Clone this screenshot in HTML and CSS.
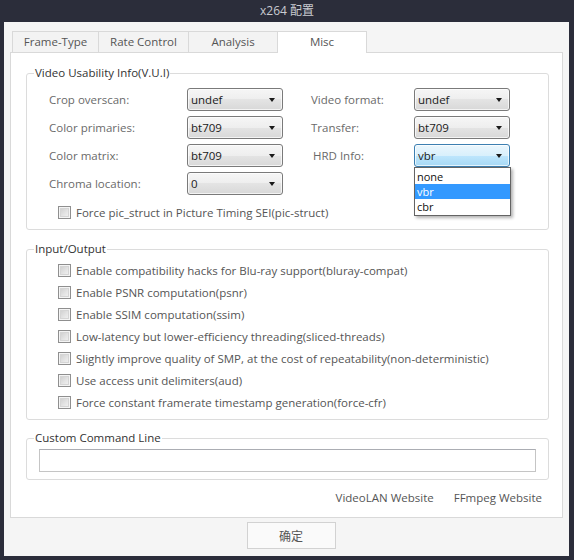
FILE: index.html
```html
<!DOCTYPE html>
<html>
<head>
<meta charset="utf-8">
<link rel="stylesheet" href="styles.css">
</head>
<body>
<div class="window">
  <div class="titlebar">x264 配置</div>
  <div class="client">
    <div class="tabs">
      <div class="tab t1">Frame-Type</div>
      <div class="tab t2">Rate Control</div>
      <div class="tab t3">Analysis</div>
      <div class="tab t4 active">Misc</div>
    </div>
    <div class="pane">
      <fieldset class="group vui">
        <legend>Video Usability Info(V.U.I)</legend>
        <div class="vui-body">
          <div class="grid">
            <div class="lbl">Crop overscan:</div>
            <div class="combo"><span>undef</span><i class="arrow"></i></div>
            <div></div>
            <div class="lbl">Video format:</div>
            <div class="combo"><span>undef</span><i class="arrow"></i></div>

            <div class="lbl">Color primaries:</div>
            <div class="combo"><span>bt709</span><i class="arrow"></i></div>
            <div></div>
            <div class="lbl">Transfer:</div>
            <div class="combo"><span>bt709</span><i class="arrow"></i></div>

            <div class="lbl">Color matrix:</div>
            <div class="combo"><span>bt709</span><i class="arrow"></i></div>
            <div></div>
            <div class="lbl lbl-hrd">HRD Info:</div>
            <div class="combo focus"><span>vbr</span><i class="arrow"></i>
              <div class="dropdown">
                <div class="opt">none</div>
                <div class="opt sel">vbr</div>
                <div class="opt">cbr</div>
              </div>
            </div>

            <div class="lbl">Chroma location:</div>
            <div class="combo"><span>0</span><i class="arrow"></i></div>
          </div>
          <div class="check first"><i class="box"></i><span>Force pic_struct in Picture Timing SEI(pic-struct)</span></div>
        </div>
      </fieldset>

      <fieldset class="group io">
        <legend>Input/Output</legend>
        <div class="io-body">
          <div class="check"><i class="box"></i><span>Enable compatibility hacks for Blu-ray support(bluray-compat)</span></div>
          <div class="check"><i class="box"></i><span>Enable PSNR computation(psnr)</span></div>
          <div class="check"><i class="box"></i><span>Enable SSIM computation(ssim)</span></div>
          <div class="check"><i class="box"></i><span>Low-latency but lower-efficiency threading(sliced-threads)</span></div>
          <div class="check"><i class="box"></i><span>Slightly improve quality of SMP, at the cost of repeatability(non-deterministic)</span></div>
          <div class="check"><i class="box"></i><span>Use access unit delimiters(aud)</span></div>
          <div class="check"><i class="box"></i><span>Force constant framerate timestamp generation(force-cfr)</span></div>
        </div>
      </fieldset>

      <fieldset class="group cmd">
        <legend>Custom Command Line</legend>
        <div class="cmd-body">
          <div class="input"></div>
        </div>
      </fieldset>

      <div class="links">
        <span>VideoLAN Website</span>
        <span>FFmpeg Website</span>
      </div>
    </div>
    <div class="footer">
      <div class="btn">确定</div>
    </div>
  </div>
</div>
</body>
</html>
```

FILE: styles.css
```css
* { box-sizing: border-box; }
html, body { margin: 0; padding: 0; }
body {
  background: #2b2d3a;
  font-family: "Open Sans", "Noto Sans CJK SC", sans-serif;
  font-size: 11.5px;
  color: #333;
}
.window {
  width: 574px;
  height: 560px;
  background: #2b2d3a;
  display: flex;
  flex-direction: column;
}
.titlebar {
  height: 22px;
  line-height: 22px;
  text-align: center;
  color: #c9cbd1;
  font-size: 12px;
  font-family: "Open Sans", "Noto Sans CJK SC", sans-serif;
}
.client {
  flex: 1;
  margin: 0 5px 4px 4px;
  background: #f5f5f5;
  padding-top: 9px;
  display: flex;
  flex-direction: column;
}
.tabs {
  display: flex;
  margin-left: 8px;
  height: 21px;
}
.tab {
  height: 21px;
  line-height: 20px;
  text-align: center;
  color: #555;
  background: #f3f3f3;
  border: 1px solid #d9d9d9;
  border-bottom: none;
  border-right: none;
  font-size: 11.5px;
}
.t1 { width: 86px; }
.t2 { width: 90px; }
.t3 { width: 89px; }
.t4 { width: 90px; border-right: 1px solid #d9d9d9; }
.tab.active {
  background: #fff;
  position: relative;
  z-index: 1;
  height: 22px;
}
.pane {
  margin-left: 6px;
  width: 553px;
  height: 466px;
  background: #fff;
  border: 1px solid #d9d9d9;
  padding: 12px 13px 0 15px;
}
.group {
  margin: 0;
  padding: 0;
  border: 1px solid #dcdcdc;
  border-radius: 3px;
  min-width: 0;
}
.group legend {
  margin-left: 7px;
  padding: 0 1px;
  line-height: 16px;
  height: 16px;
  color: #333;
  font-size: 11.5px;
}
.vui-body {
  padding: 7px 0 9px 22px;
}
.grid {
  display: grid;
  grid-template-columns: 138px 96px 28px 103px 96px;
  grid-auto-rows: 23px;
  row-gap: 5px;
}
.lbl {
  color: #6a6a6a;
  line-height: 23px;
}
.lbl-hrd { padding-left: 2px; }
.combo {
  position: relative;
  border: 1px solid #7a7a7a;
  border-radius: 3px;
  background: linear-gradient(#f6f6f6 0%, #eeeeee 50%, #e4e4e4 50%, #d8d8d8 100%);
  box-shadow: inset 0 0 0 1px rgba(255,255,255,0.7);
  color: #1a1a1a;
  line-height: 21px;
  padding-left: 3px;
}
.combo.focus {
  border-color: #3c7fb1;
  background: linear-gradient(#eaf6fd 0%, #d9f0fc 50%, #bee6fd 50%, #a7d9f5 100%);
}
.arrow {
  position: absolute;
  right: 7px;
  top: 9px;
  width: 0;
  height: 0;
  border-left: 3.5px solid transparent;
  border-right: 3.5px solid transparent;
  border-top: 4px solid #1a1a1a;
}
.dropdown {
  position: absolute;
  left: -1px;
  top: 22px;
  width: 97px;
  background: #fff;
  border: 1px solid #646464;
  box-shadow: 2px 2px 3px rgba(0,0,0,0.3);
  z-index: 5;
  padding: 1px 0;
}
.opt {
  height: 15px;
  line-height: 15px;
  padding-left: 2px;
  color: #111;
  font-size: 11px;
}
.opt.sel {
  background: #3399ff;
  color: #fff;
}
.check {
  display: flex;
  align-items: center;
  height: 22px;
  color: #555;
}
.check.first {
  height: 16px;
  margin-top: 9px;
  margin-left: 9px;
}
.box {
  width: 13px;
  height: 13px;
  border: 1px solid #8f8f8f;
  background: linear-gradient(135deg, #c9c9c9 0%, #e6e6e6 60%, #f4f4f4 100%);
  box-shadow: inset 0 0 0 1px #f4f4f4, inset 0 0 0 2px #d5d5d5;
  margin-right: 5px;
  flex: none;
}
.group.io { margin-top: 11px; }
.io-body {
  padding: 2px 0 6px 31px;
}
.group.cmd { margin-top: 10px; }
.cmd-body {
  padding: 3px 0 7px 12px;
}
.input {
  width: 497px;
  height: 23px;
  border: 1px solid #c5c5c5;
  border-top-color: #abadb3;
  background: #fff;
}
.links {
  margin-top: 10px;
  display: flex;
  justify-content: flex-end;
  gap: 20px;
  padding-right: 7px;
  color: #555;
  line-height: 16px;
  font-size: 11.5px;
}
.footer {
  flex: 1;
  display: flex;
  justify-content: center;
  align-items: flex-start;
  padding-top: 4px;
  padding-left: 9px;
}
.btn {
  width: 89px;
  height: 27px;
  border: 1px solid #d2d2d2;
  background: #fafafa;
  color: #555;
  text-align: center;
  line-height: 25px;
  font-size: 12px;
  font-family: "Noto Sans CJK SC", sans-serif;
}
```
